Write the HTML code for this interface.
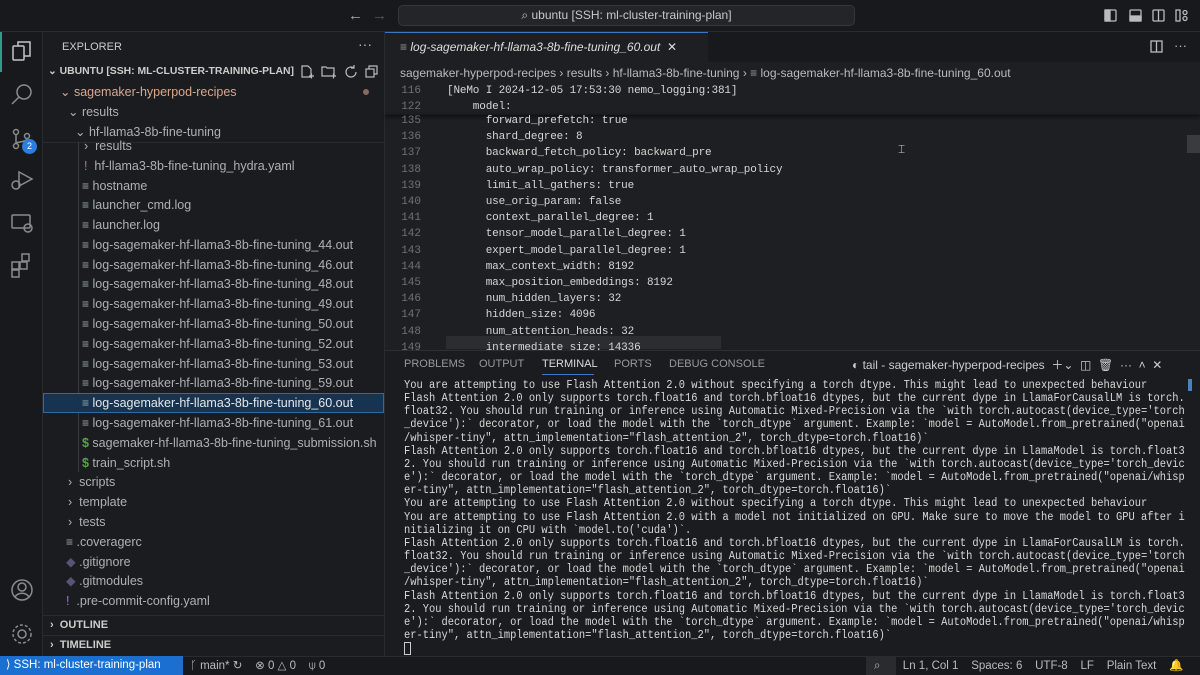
<!DOCTYPE html>
<html><head><meta charset="utf-8"><style>
*{margin:0;padding:0;box-sizing:border-box}
body{width:1200px;height:675px;overflow:hidden;background:#1b1c1f;font-family:"Liberation Sans",sans-serif;color:#ccc;position:relative}
.a{position:absolute;white-space:pre}
#title{left:0;top:0;width:1200px;height:32px;background:#18191c;border-bottom:1px solid #2a2b2e}
#act{left:0;top:32px;width:43px;height:624px;background:#18191c;border-right:1px solid #2a2b2e}
#side{left:43px;top:32px;width:342px;height:624px;background:#1b1c1f;border-right:1px solid #2a2b2e}
#ed{left:385px;top:32px;width:815px;height:318px;background:#1e1f22}
#panel{left:385px;top:350px;width:815px;height:306px;background:#1b1c1f;border-top:1px solid #2e2f33;overflow:hidden}
#status{left:0;top:656px;width:1200px;height:19px;background:#18191c;border-top:1px solid #2a2b2e;font-size:11.5px;color:#bbb}
.t{font-size:12.5px;color:#aeb0b3;height:20px;line-height:20px}
.code{font-family:"Liberation Mono",monospace;font-size:11px;letter-spacing:-0.15px;color:#d6d6d6}
.ln{font-family:"Liberation Mono",monospace;font-size:11px;color:#6e7176;width:36px;text-align:right}
.term{font-family:"Liberation Mono",monospace;font-size:11.5px;color:#d8d8d8;line-height:13.15px;transform:scaleX(0.905);transform-origin:0 0}
.ic{font-size:12px;color:#9aa}
</style></head><body>
<div class="a" id="title"></div>
<div class="a" style="left:348px;top:7px;font-size:15px;color:#aaa">←</div>
<div class="a" style="left:372px;top:7px;font-size:15px;color:#555">→</div>
<div class="a" style="left:398px;top:5px;width:457px;height:21px;background:#242529;border:1px solid #36373b;border-radius:5px;font-size:12px;color:#c8c8c8;text-align:center;line-height:19px">⌕ ubuntu [SSH: ml-cluster-training-plan]</div>
<svg class="a" style="left:1100px;top:8px" width="100" height="16" fill="none" stroke="#bbb" stroke-width="1.3"><rect x="5" y="2" width="11" height="11" rx="1"/><rect x="5" y="2" width="5" height="11" fill="#bbb"/><rect x="30" y="2" width="11" height="11" rx="1"/><rect x="30" y="8" width="11" height="5" fill="#bbb"/><rect x="53" y="2" width="11" height="11" rx="1"/><line x1="58.5" y1="2" x2="58.5" y2="13"/><rect x="76" y="2" width="4" height="11"/><circle cx="85" cy="4.5" r="2"/><circle cx="85" cy="10.5" r="2"/></svg>

<div class="a" id="act"></div>
<div class="a" style="left:0;top:32px;width:2px;height:40px;background:#2e9c86"></div>
<svg class="a" style="left:10px;top:40px" width="24" height="240" fill="none" stroke="#c5c5c5" stroke-width="1.5">
<rect x="3" y="6" width="11" height="14" rx="1"/><path d="M8 6V2h12v14h-6"/>
<g stroke="#8b8b8b"><circle cx="14" cy="52" r="7"/><path d="M9 57l-7 7"/>
<circle cx="6" cy="92" r="2.5"/><circle cx="6" cy="106" r="2.5"/><circle cx="17" cy="96" r="2.5"/><path d="M6 94.5v9M17 98.5c0 4-11 3-11 5"/>
<path d="M9 132l13 7-13 7z"/><circle cx="6" cy="145" r="4"/>
<rect x="2" y="175" width="18" height="13" rx="1"/><circle cx="18" cy="188" r="4"/>
<rect x="2" y="222" width="7" height="7"/><rect x="10" y="222" width="7" height="7"/><rect x="2" y="230" width="7" height="7"/><rect x="12" y="214" width="7" height="7"/></g></svg>
<div class="a" style="left:22px;top:139px;width:15px;height:15px;border-radius:8px;background:#2b7de0;color:#fff;font-size:9px;text-align:center;line-height:15px">2</div>
<svg class="a" style="left:10px;top:578px" width="24" height="70" fill="none" stroke="#8b8b8b" stroke-width="1.5"><circle cx="12" cy="12" r="10"/><circle cx="12" cy="9" r="4"/><path d="M5 19c3-5 11-5 14 0"/><circle cx="12" cy="56" r="4"/><circle cx="12" cy="56" r="9" stroke-dasharray="3 2"/></svg>

<div class="a" id="side"></div>
<div class="a" style="left:62px;top:41px;font-size:11px;color:#ccc">EXPLORER</div>
<div class="a" style="left:358px;top:36px;font-size:14px;color:#bbb">···</div>
<div class="a" style="left:48px;top:65px;font-size:10.4px;font-weight:bold;color:#ccc">⌄ UBUNTU [SSH: ML-CLUSTER-TRAINING-PLAN]</div>
<svg class="a" style="left:300px;top:64px" width="80" height="16" fill="none" stroke="#bbb" stroke-width="1.2"><path d="M2 2h6l3 3v8H2zM9 12h5M11.5 9.5v5"/><path d="M22 3h4l1 1h7v8H22zM31 12h5M33.5 9.5v5"/><path d="M54 4a5 5 0 1 0 2 4M54 1v3h-3"/><rect x="66" y="5" width="8" height="8"/><path d="M69 5V2h8v8h-3"/></svg>
<div class="a t" style="left:60px;top:82px;color:#d8a890">⌄ sagemaker-hyperpod-recipes</div>
<div class="a" style="left:363px;top:89px;width:6px;height:6px;border-radius:3px;background:#8a6a60"></div>
<div class="a t" style="left:68px;top:102px">⌄ results</div>
<div class="a t" style="left:75px;top:122px">⌄ hf-llama3-8b-fine-tuning</div>
<div class="a" style="left:43px;top:142px;width:342px;height:1px;background:#2a2b2e"></div>
<div class="a" style="left:78px;top:142px;width:1px;height:330px;background:#3a3b3e"></div>
<div class="a t" style="left:84px;top:136px">›&nbsp; results</div>
<div class="a t" style="left:84px;top:156px"><span style="color:#a070d0">!</span>&nbsp;&nbsp;hf-llama3-8b-fine-tuning_hydra.yaml</div>
<div class="a t" style="left:82px;top:176px"><span class="ic">≡</span> hostname</div>
<div class="a t" style="left:82px;top:195px"><span class="ic">≡</span> launcher_cmd.log</div>
<div class="a t" style="left:82px;top:215px"><span class="ic">≡</span> launcher.log</div>
<div class="a t" style="left:82px;top:235px"><span class="ic">≡</span> log-sagemaker-hf-llama3-8b-fine-tuning_44.out</div>
<div class="a t" style="left:82px;top:255px"><span class="ic">≡</span> log-sagemaker-hf-llama3-8b-fine-tuning_46.out</div>
<div class="a t" style="left:82px;top:274px"><span class="ic">≡</span> log-sagemaker-hf-llama3-8b-fine-tuning_48.out</div>
<div class="a t" style="left:82px;top:294px"><span class="ic">≡</span> log-sagemaker-hf-llama3-8b-fine-tuning_49.out</div>
<div class="a t" style="left:82px;top:314px"><span class="ic">≡</span> log-sagemaker-hf-llama3-8b-fine-tuning_50.out</div>
<div class="a t" style="left:82px;top:334px"><span class="ic">≡</span> log-sagemaker-hf-llama3-8b-fine-tuning_52.out</div>
<div class="a t" style="left:82px;top:354px"><span class="ic">≡</span> log-sagemaker-hf-llama3-8b-fine-tuning_53.out</div>
<div class="a t" style="left:82px;top:373px"><span class="ic">≡</span> log-sagemaker-hf-llama3-8b-fine-tuning_59.out</div>
<div class="a" style="left:43px;top:393px;width:341px;height:20px;background:#163352;border:1px solid #2e6aa8"></div>
<div class="a t" style="left:82px;top:393px;color:#e8e8e8"><span class="ic">≡</span> log-sagemaker-hf-llama3-8b-fine-tuning_60.out</div>
<div class="a t" style="left:82px;top:413px"><span class="ic">≡</span> log-sagemaker-hf-llama3-8b-fine-tuning_61.out</div>
<div class="a t" style="left:82px;top:433px"><span style="color:#4caa3c;font-weight:bold">$</span>&nbsp;sagemaker-hf-llama3-8b-fine-tuning_submission.sh</div>
<div class="a t" style="left:82px;top:453px"><span style="color:#4caa3c;font-weight:bold">$</span>&nbsp;train_script.sh</div>
<div class="a t" style="left:68px;top:472px">›&nbsp; scripts</div>
<div class="a t" style="left:68px;top:492px">›&nbsp; template</div>
<div class="a t" style="left:68px;top:512px">›&nbsp; tests</div>
<div class="a t" style="left:66px;top:532px"><span class="ic">≡</span> .coveragerc</div>
<div class="a t" style="left:66px;top:552px"><span style="color:#557">◆</span> .gitignore</div>
<div class="a t" style="left:66px;top:571px"><span style="color:#557">◆</span> .gitmodules</div>
<div class="a t" style="left:66px;top:591px"><span style="color:#a070d0">!</span>&nbsp; .pre-commit-config.yaml</div>
<div class="a" style="left:43px;top:615px;width:342px;height:1px;background:#2a2b2e"></div>
<div class="a" style="left:50px;top:619px;font-size:11px;font-weight:bold;color:#ccc">›&nbsp; OUTLINE</div>
<div class="a" style="left:43px;top:635px;width:342px;height:1px;background:#2a2b2e"></div>
<div class="a" style="left:50px;top:639px;font-size:11px;font-weight:bold;color:#ccc">›&nbsp; TIMELINE</div>

<div class="a" id="ed"></div>
<div class="a" style="left:385px;top:32px;width:815px;height:30px;background:#18191c"></div>
<div class="a" style="left:385px;top:32px;width:323px;height:30px;background:#1e1f22;border-top:1px solid #3b78c8"></div>
<div class="a" style="left:400px;top:40px;font-size:12px;font-style:italic;color:#ddd"><span style="font-style:normal;color:#999">≡</span> log-sagemaker-hf-llama3-8b-fine-tuning_60.out&nbsp; <span style="font-style:normal">✕</span></div>
<svg class="a" style="left:1150px;top:40px" width="14" height="14" fill="none" stroke="#bbb" stroke-width="1.3"><rect x="1" y="1" width="11" height="11"/><line x1="6.5" y1="1" x2="6.5" y2="12"/></svg>
<div class="a" style="left:1174px;top:38px;font-size:13px;color:#bbb">···</div>
<div class="a" style="left:400px;top:66px;font-size:12px;color:#bbb">sagemaker-hyperpod-recipes › results › hf-llama3-8b-fine-tuning › <span style="color:#999">≡</span> log-sagemaker-hf-llama3-8b-fine-tuning_60.out</div>
<div class="a" style="left:385px;top:115px;width:815px;height:1px;background:#111;box-shadow:0 1px 3px #000"></div>
<div class="a" style="left:1187px;top:135px;width:13px;height:18px;background:#3a3b3f"></div>
<div class="a" style="left:446px;top:336px;width:275px;height:13px;background:#2c2d31"></div>
<div class="a ln" style="left:385px;top:83px;line-height:16.2px">116
122</div>
<div class="a code" style="left:447px;top:83px;line-height:16.2px">[NeMo I 2024-12-05 17:53:30 nemo_logging:381]
    model:</div>
<div class="a ln" style="left:385px;top:113px;line-height:16.2px">135
136
137
138
139
140
141
142
143
144
145
146
147
148
149</div>
<div class="a code" style="left:447px;top:113px;line-height:16.2px">      forward_prefetch: true
      shard_degree: 8
      backward_fetch_policy: backward_pre
      auto_wrap_policy: transformer_auto_wrap_policy
      limit_all_gathers: true
      use_orig_param: false
      context_parallel_degree: 1
      tensor_model_parallel_degree: 1
      expert_model_parallel_degree: 1
      max_context_width: 8192
      max_position_embeddings: 8192
      num_hidden_layers: 32
      hidden_size: 4096
      num_attention_heads: 32
      intermediate_size: 14336</div>
<div class="a" style="left:898px;top:142px;font-size:12px;color:#ccc">⌶</div>

<div class="a" id="panel"></div>
<div class="a" style="left:404px;top:358px;font-size:11px;color:#999">PROBLEMS</div>
<div class="a" style="left:479px;top:358px;font-size:11px;color:#999">OUTPUT</div>
<div class="a" style="left:542px;top:358px;font-size:11px;color:#ddd">TERMINAL</div>
<div class="a" style="left:614px;top:358px;font-size:11px;color:#999">PORTS</div>
<div class="a" style="left:669px;top:358px;font-size:11px;color:#999">DEBUG CONSOLE</div>
<div class="a" style="left:542px;top:374px;width:52px;height:1px;background:#3b78c8"></div>
<div class="a" style="left:852px;top:356px;font-size:12px;color:#ccc">◐ tail - sagemaker-hyperpod-recipes&nbsp; ＋⌄&nbsp; ◫&nbsp; 🗑&nbsp; ···&nbsp; ˄&nbsp; ✕</div>
<div class="a" style="left:1188px;top:379px;width:4px;height:12px;background:#4a7fc0"></div>
<div class="a term" style="left:404px;top:379px">You are attempting to use Flash Attention 2.0 without specifying a torch dtype. This might lead to unexpected behaviour
Flash Attention 2.0 only supports torch.float16 and torch.bfloat16 dtypes, but the current dype in LlamaForCausalLM is torch.
float32. You should run training or inference using Automatic Mixed-Precision via the `with torch.autocast(device_type='torch
_device'):` decorator, or load the model with the `torch_dtype` argument. Example: `model = AutoModel.from_pretrained("openai
/whisper-tiny", attn_implementation="flash_attention_2", torch_dtype=torch.float16)`
Flash Attention 2.0 only supports torch.float16 and torch.bfloat16 dtypes, but the current dype in LlamaModel is torch.float3
2. You should run training or inference using Automatic Mixed-Precision via the `with torch.autocast(device_type='torch_devic
e'):` decorator, or load the model with the `torch_dtype` argument. Example: `model = AutoModel.from_pretrained("openai/whisp
er-tiny", attn_implementation="flash_attention_2", torch_dtype=torch.float16)`
You are attempting to use Flash Attention 2.0 without specifying a torch dtype. This might lead to unexpected behaviour
You are attempting to use Flash Attention 2.0 with a model not initialized on GPU. Make sure to move the model to GPU after i
nitializing it on CPU with `model.to('cuda')`.
Flash Attention 2.0 only supports torch.float16 and torch.bfloat16 dtypes, but the current dype in LlamaForCausalLM is torch.
float32. You should run training or inference using Automatic Mixed-Precision via the `with torch.autocast(device_type='torch
_device'):` decorator, or load the model with the `torch_dtype` argument. Example: `model = AutoModel.from_pretrained("openai
/whisper-tiny", attn_implementation="flash_attention_2", torch_dtype=torch.float16)`
Flash Attention 2.0 only supports torch.float16 and torch.bfloat16 dtypes, but the current dype in LlamaModel is torch.float3
2. You should run training or inference using Automatic Mixed-Precision via the `with torch.autocast(device_type='torch_devic
e'):` decorator, or load the model with the `torch_dtype` argument. Example: `model = AutoModel.from_pretrained("openai/whisp
er-tiny", attn_implementation="flash_attention_2", torch_dtype=torch.float16)`</div>
<div class="a" style="left:404px;top:642px;width:7px;height:13px;border:1px solid #ccc"></div>

<div class="a" id="status"></div>
<div class="a" style="left:0;top:656px;width:183px;height:19px;background:#1a6fd0;color:#fff;font-size:11.5px;line-height:19px;padding-left:6px">⟩ SSH: ml-cluster-training-plan</div>
<div class="a" style="left:190px;top:658px;font-size:11.5px;color:#bbb">ᚴ main* ↻&nbsp;&nbsp;&nbsp; ⊗ 0 △ 0&nbsp;&nbsp;&nbsp; ⍦ 0</div>
<div class="a" style="left:866px;top:656px;width:30px;height:19px;background:#2a2b2f"></div>
<div class="a" style="left:874px;top:658px;font-size:11.5px;color:#bbb">⌕&nbsp;&nbsp;&nbsp;&nbsp;&nbsp;&nbsp; Ln 1, Col 1&nbsp;&nbsp;&nbsp; Spaces: 6&nbsp;&nbsp;&nbsp; UTF-8&nbsp;&nbsp;&nbsp; LF&nbsp;&nbsp;&nbsp; Plain Text&nbsp;&nbsp;&nbsp; 🔔</div>
</body></html>
